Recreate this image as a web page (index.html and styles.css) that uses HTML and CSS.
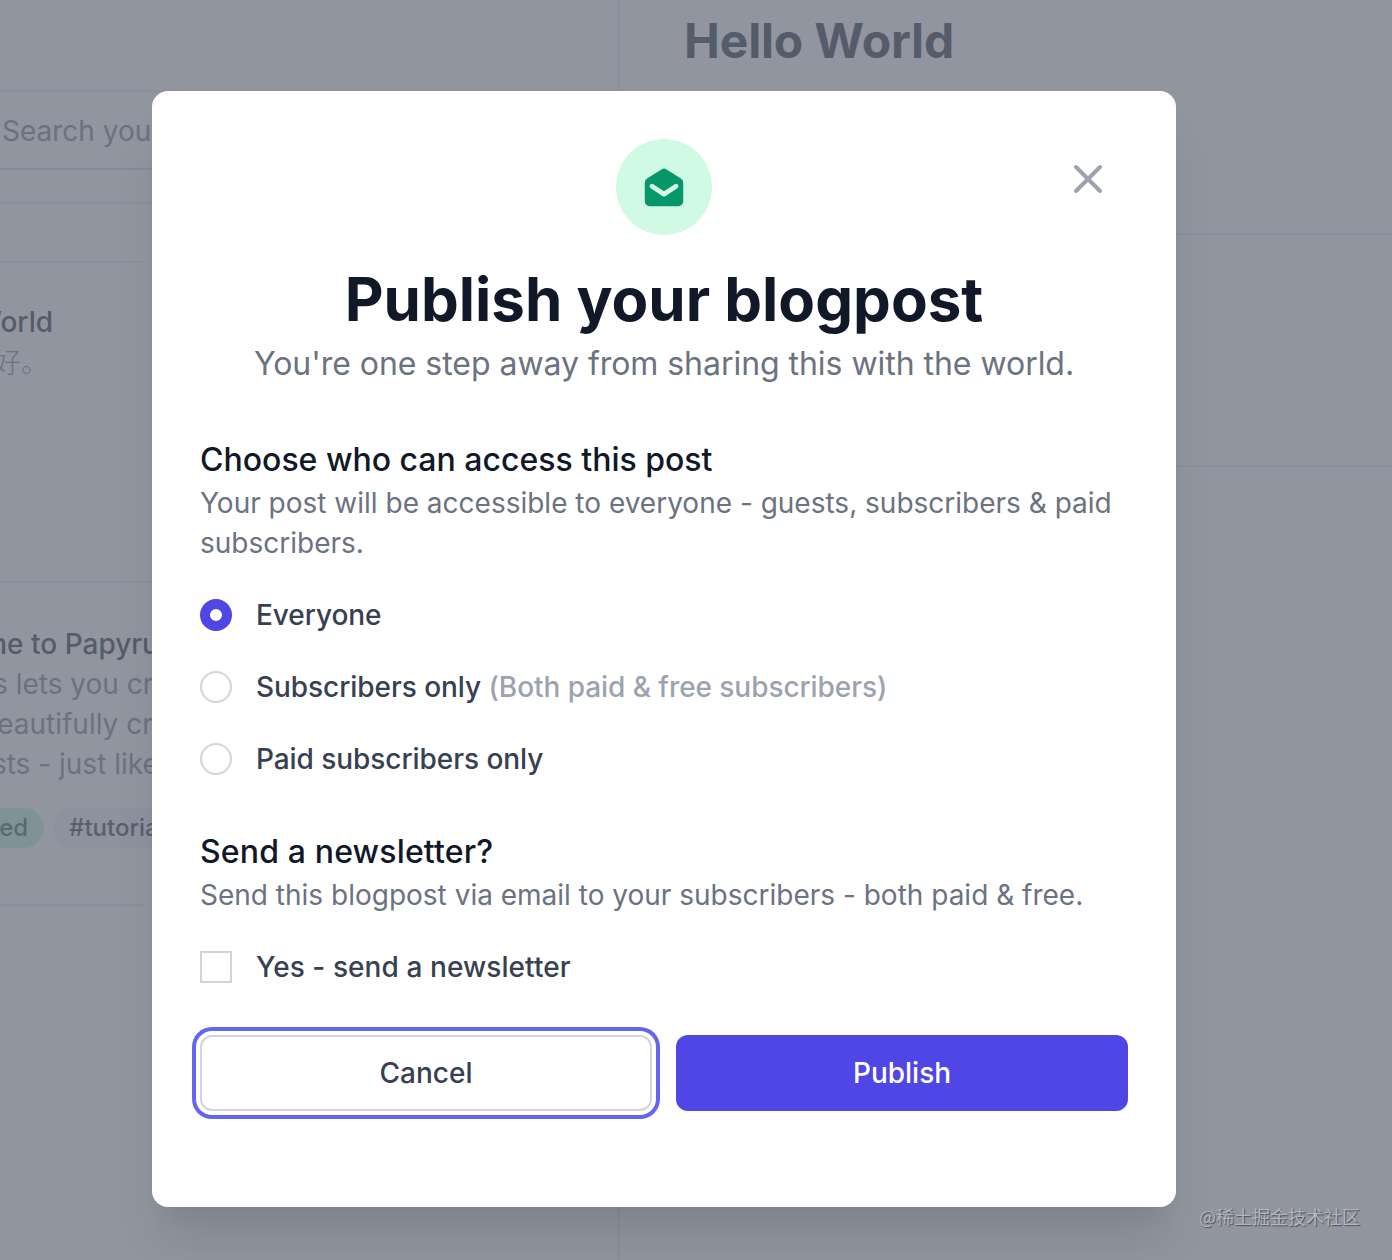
FILE: index.html
```html
<!DOCTYPE html>
<html lang="en">
<head>
    <meta charset="UTF-8">
    <meta name="viewport" content="width=device-width, initial-scale=1.0">
    <title>Publish your blogpost</title>
    <link rel="stylesheet" href="styles.css">
</head>
<body>
    <div class="app">
        <div class="sidebar">
            <div class="sidebar-header"></div>
            <div class="search">Search your posts</div>
            <div class="toolbar"></div>
            <div class="post-list">
                <div class="post">
                    <div class="post-title first-title">Hello World</div>
                    <div class="post-text cjk">你好。</div>
                </div>
                <div class="post">
                    <div class="post-title second-title">Welcome to Papyrus</div>
                    <div class="post-text line-one">Papyrus lets you create</div>
                    <div class="post-text line-two">beautifully crafted</div>
                    <div class="post-text line-three">posts - just like this</div>
                    <div class="tags">
                        <span class="tag published">Published</span>
                        <span class="tag">#tutorial</span>
                    </div>
                </div>
            </div>
        </div>
        <div class="preview">
            <div class="preview-header">
                <h1>Hello World</h1>
            </div>
            <div class="preview-body"></div>
        </div>
    </div>

    <div class="overlay">
        <div class="modal">
            <button class="close-button" aria-label="Close">
                <svg width="48" height="48" viewBox="0 0 24 24" fill="none" stroke="currentColor" stroke-width="2" stroke-linecap="round" stroke-linejoin="round">
                    <path d="M6 18L18 6M6 6l12 12"/>
                </svg>
            </button>

            <div class="modal-icon">
                <svg width="48" height="48" viewBox="0 0 20 20" fill="currentColor">
                    <path fill-rule="evenodd" clip-rule="evenodd" d="M2.94 6.412A2 2 0 002 8.108V16a2 2 0 002 2h12a2 2 0 002-2V8.108a2 2 0 00-.94-1.696l-6-3.75a2 2 0 00-2.12 0l-6 3.75zm2.615 2.423a1 1 0 10-1.11 1.664l5 3.333a1 1 0 001.11 0l5-3.333a1 1 0 00-1.11-1.664L10 11.798 5.555 8.835z"/>
                </svg>
            </div>
            <h2 class="modal-title">Publish your blogpost</h2>
            <p class="modal-subtitle">You're one step away from sharing this with the world.</p>

            <div class="section">
                <h3>Choose who can access this post</h3>
                <p>Your post will be accessible to everyone - guests, subscribers &amp; paid subscribers.</p>
                <div class="options">
                    <label class="option"><input type="radio" name="access" checked><span>Everyone</span></label>
                    <label class="option"><input type="radio" name="access"><span>Subscribers only <span class="hint">(Both paid &amp; free subscribers)</span></span></label>
                    <label class="option"><input type="radio" name="access"><span>Paid subscribers only</span></label>
                </div>
            </div>

            <div class="section newsletter">
                <h3>Send a newsletter?</h3>
                <p>Send this blogpost via email to your subscribers - both paid &amp; free.</p>
                <div class="options">
                    <label class="option"><input type="checkbox"><span>Yes - send a newsletter</span></label>
                </div>
            </div>

            <div class="actions">
                <button class="button cancel">Cancel</button>
                <button class="button publish">Publish</button>
            </div>
        </div>
    </div>

    <div class="watermark">@稀土掘金技术社区</div>
</body>
</html>
```

FILE: styles.css
```css
* {
    margin: 0;
    padding: 0;
    box-sizing: border-box;
}

body {
    font-family: Inter, "Noto Sans CJK SC", sans-serif;
    background: #ffffff;
    height: 100vh;
    overflow: hidden;
    color: #111827;
}

.app {
    display: flex;
    height: 100vh;
}

.sidebar {
    width: 620px;
    flex-shrink: 0;
    border-right: 2px solid #e5e7eb;
    white-space: nowrap;
    overflow: hidden;
}

.sidebar-header {
    height: 92px;
    border-bottom: 2px solid #e5e7eb;
}

.search {
    height: 78px;
    padding-left: 2px;
    line-height: 79px;
    font-size: 28px;
    color: #6b7280;
    border-bottom: 2px solid #d1d5db;
}

.toolbar {
    height: 34px;
    border-bottom: 2px solid #e5e7eb;
}

.post-list {
    width: 145px;
    margin-top: 57px;
    border-top: 2px solid #f0f1f3;
    border-bottom: 2px solid #e5e7eb;
}

.post {
    height: 318px;
    padding-top: 39px;
    font-size: 28px;
    line-height: 40px;
}

.post + .post {
    width: 155px;
    height: 323px;
    padding-top: 41px;
    border-top: 2px solid #eceef0;
}

.post-title {
    font-weight: 500;
    color: #111827;
}

.post-text {
    color: #6b7280;
}

.first-title {
    margin-left: -102px;
}

.cjk {
    margin: 1px 0 0 -35px;
    font-weight: 300;
}

.second-title {
    margin-left: -101px;
}

.line-one {
    margin-left: -100px;
}

.line-two {
    margin-left: -20px;
}

.line-three {
    margin-left: -42px;
}

.tags {
    display: flex;
    gap: 9px;
    margin: 24px 0 0 -101px;
}

.tag {
    height: 40px;
    padding: 0 16px;
    border-radius: 20px;
    background: #f3f4f6;
    color: #1f2937;
    font-size: 24px;
    font-weight: 500;
}

.published {
    background: #bcf6da;
    color: #065f46;
}

.preview {
    flex: 1;
}

.preview-header {
    height: 235px;
    padding: 12px 64px;
    border-bottom: 2px solid #dfe1e6;
}

.preview-header h1 {
    font-size: 48px;
    line-height: 58px;
    font-weight: 700;
    letter-spacing: -0.15px;
}

.preview-body {
    height: 232px;
    border-bottom: 2px solid #eff0f2;
}

.overlay {
    position: absolute;
    inset: 0;
    padding: 91px 0 0 152px;
    background: rgba(107, 114, 128, 0.75);
}

.modal {
    position: relative;
    width: 1024px;
    height: 1116px;
    padding: 48px;
    border-radius: 16px;
    background: #ffffff;
    box-shadow: 0 40px 50px -10px rgba(0, 0, 0, 0.1), 0 20px 20px -10px rgba(0, 0, 0, 0.04);
}

.close-button {
    position: absolute;
    top: 64px;
    right: 64px;
    width: 48px;
    height: 48px;
    border: none;
    background: none;
    color: #9ca3af;
}

.close-button svg {
    display: block;
}

.modal-icon {
    display: flex;
    align-items: center;
    justify-content: center;
    width: 96px;
    height: 96px;
    margin: 0 auto;
    border-radius: 50%;
    background: #d1fae5;
    color: #059669;
}

.modal-title {
    margin-top: 24px;
    font-size: 60px;
    line-height: 80px;
    font-weight: 700;
    text-align: center;
}

.modal-subtitle {
    height: 48px;
    font-size: 32px;
    line-height: 50px;
    color: #6b7280;
    letter-spacing: -0.04px;
    text-align: center;
}

.section {
    margin-top: 48px;
}

.section h3 {
    height: 48px;
    font-size: 32px;
    line-height: 50px;
    font-weight: 500;
}

.section p {
    font-size: 28px;
    line-height: 40px;
    color: #6b7280;
}

.newsletter h3 {
    letter-spacing: 0.15px;
}

.options {
    display: flex;
    flex-direction: column;
    gap: 32px;
    margin-top: 32px;
}

.option {
    display: flex;
    align-items: center;
    gap: 24px;
    font-size: 28px;
    line-height: 40px;
    font-weight: 500;
    color: #374151;
    letter-spacing: -0.06px;
}

.newsletter .option {
    letter-spacing: 0.08px;
}

.option input {
    appearance: none;
    width: 32px;
    height: 32px;
    border: 2px solid #d1d5db;
    background: #ffffff;
}

.option input[type="radio"] {
    border-radius: 50%;
}

.option input[type="radio"]:checked {
    border: 10px solid #4f46e5;
}

.hint {
    color: #9ca3af;
}

.actions {
    display: grid;
    grid-template-columns: 1fr 1fr;
    gap: 24px;
    margin-top: 48px;
}

.button {
    height: 76px;
    border: 2px solid transparent;
    border-radius: 12px;
    font-family: inherit;
    font-size: 28px;
    font-weight: 500;
}

.cancel {
    background: #ffffff;
    border-color: #d1d5db;
    color: #374151;
    box-shadow: 0 0 0 4px #ffffff, 0 0 0 8px #6366f1;
}

.publish {
    background: #4f46e5;
    color: #ffffff;
}

.watermark {
    position: absolute;
    right: 32px;
    bottom: 30px;
    font-family: "Noto Sans CJK SC", sans-serif;
    font-size: 18px;
    line-height: 27px;
    color: #b3b6be;
    text-shadow: 1px 1px 1px #4b4f59;
}
```
